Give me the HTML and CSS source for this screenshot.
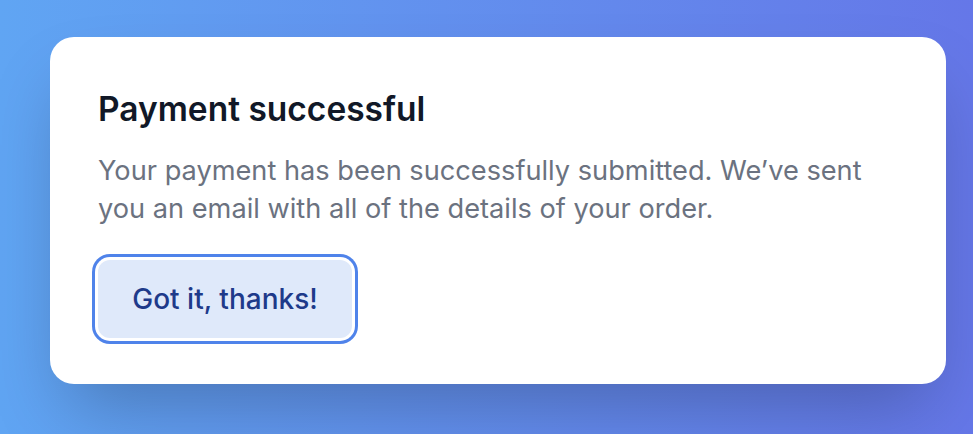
FILE: index.html
```html
<!DOCTYPE html>
<html lang="en">
  <head>
    <meta charset="UTF-8" />
    <meta name="viewport" content="width=device-width, initial-scale=1.0" />
    <title>Payment successful</title>
    <link rel="stylesheet" href="styles.css">
  </head>
  <body>
    <main>
      <section class="card">
        <h2>Payment successful</h2>
        <p>
          Your payment has been successfully submitted. We’ve sent you an email
          with all of the details of your order.
        </p>
        <div class="actions">
          <button>Got it, thanks!</button>
        </div>
      </section>
    </main>
  </body>
</html>
```

FILE: styles.css
```css
* {
  box-sizing: border-box;
  margin: 0;
  padding: 0;
}

html,
body {
  height: 100%;
  font-family: Inter, "Noto Sans", sans-serif;
}

body {
  background: linear-gradient(to right, #60a5f3, #6577e8);
  overflow: hidden;
}

main {
  padding: 37px 27px 0 50px;
}

.card {
  background-color: white;
  border-radius: 24px;
  padding: 48px;
  height: 347px;
  box-shadow: 0 37px 75px -18px rgba(0, 0, 0, 0.25);
}

h2 {
  font-size: 33.5px;
  line-height: 48px;
  font-weight: 600;
  color: #111827;
  margin-bottom: 19px;
}

p {
  font-size: 27.2px;
  line-height: 38px;
  color: #6b7280;
}

.actions {
  margin-top: 32px;
  display: flex;
}

button {
  font-family: inherit;
  background-color: #dfe9fa;
  color: #1e3a8a;
  border: none;
  height: 78px;
  width: 254px;
  font-size: 28px;
  font-weight: 500;
  border-radius: 12px;
  box-shadow: 0 0 0 3px white, 0 0 0 6px #4f83ea;
  cursor: pointer;
}
```
